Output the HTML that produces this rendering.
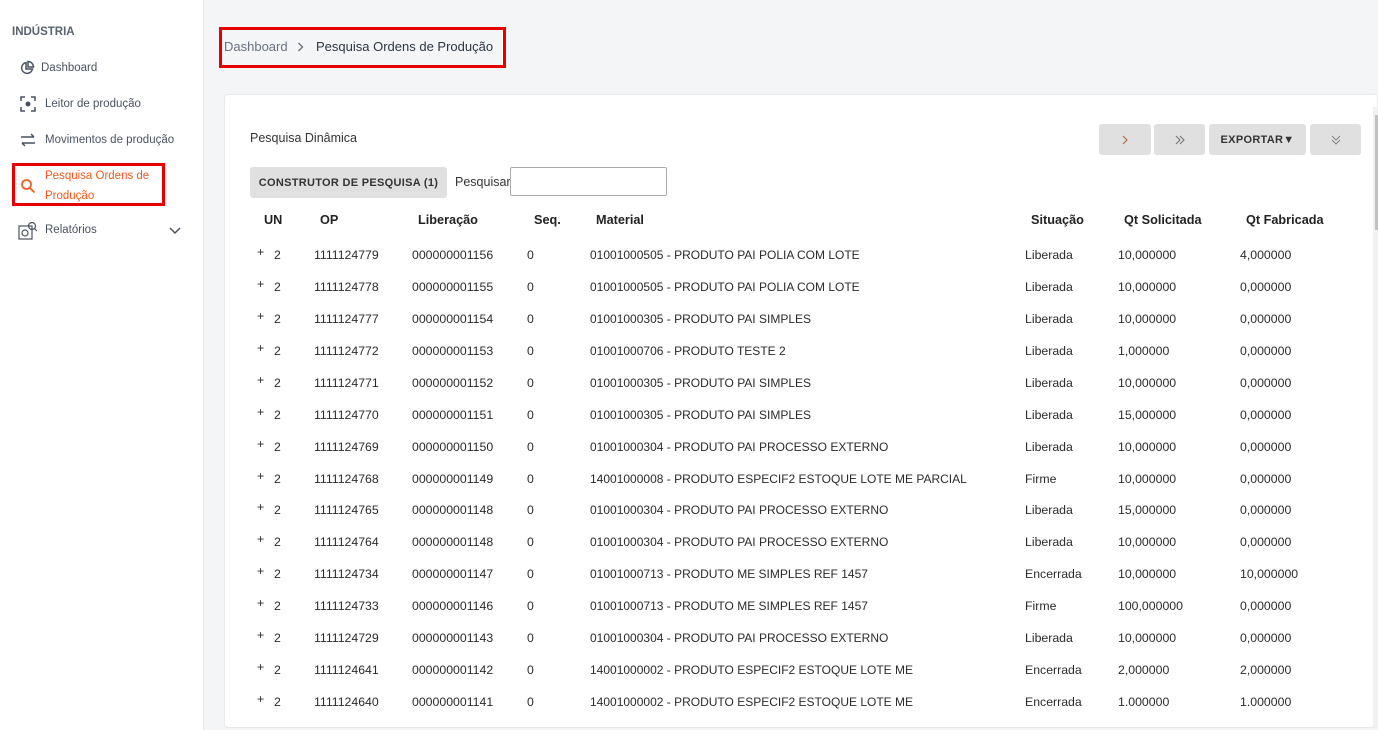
<!DOCTYPE html>
<html><head><meta charset="utf-8">
<style>
*{margin:0;padding:0;box-sizing:border-box}
body{width:1378px;height:730px;overflow:hidden;background:#f4f5f7;font-family:"Liberation Sans",sans-serif;position:relative;color:#222}
.a{position:absolute;white-space:nowrap}
#side{position:absolute;left:0;top:0;width:204px;height:730px;background:#fff;border-right:1px solid #e4e6ea}
.nav{font-size:11.5px;color:#4a5260}
.card{position:absolute;left:224px;top:94px;width:1154px;height:634px;background:#fff;border:1px solid #e6e8eb;border-radius:4px}
.btn{position:absolute;background:#e0e0e0;border-radius:3px;height:31px;top:124px;font-size:11.5px;color:#333;display:flex;align-items:center;justify-content:center;letter-spacing:.3px}
.h{font-size:12.7px;font-weight:bold;color:#222;top:213px}
.c{font-size:12.3px;color:#2a2a2a}
.m{font-size:12px}
</style></head><body>
<div id="side">
<div class="a" style="left:12px;top:26px;font-size:11.5px;color:#5a6270;font-weight:bold">INDÚSTRIA</div>
<svg class="a" style="left:19px;top:60px" width="16" height="16" viewBox="0 0 16 16" fill="none" stroke="#4a5260" stroke-width="1.5"><path d="M7 2.5A5.5 5.5 0 1 0 13.5 9H7z"/><path d="M9 1.5A5.5 5.5 0 0 1 14.5 7H9z"/></svg>
<div class="a nav" style="left:41px;top:62px">Dashboard</div>
<svg class="a" style="left:20px;top:96px" width="16" height="16" viewBox="0 0 16 16" fill="none" stroke="#4a5260" stroke-width="1.5"><path d="M1 5V1h4M11 1h4v4M15 11v4h-4M5 15H1v-4"/><circle cx="8" cy="8" r="2.5" fill="#4a5260" stroke="none"/></svg>
<div class="a nav" style="left:45px;top:98px">Leitor de produção</div>
<svg class="a" style="left:20px;top:132px" width="16" height="16" viewBox="0 0 16 16" fill="none" stroke="#4a5260" stroke-width="1.5"><path d="M1 5h13M11 2l3 3M15 11H2M5 14l-3-3"/></svg>
<div class="a nav" style="left:45px;top:134px">Movimentos de produção</div>
<div class="a" style="left:12px;top:163px;width:153px;height:43px;border:3px solid #e60000"></div>
<svg class="a" style="left:20px;top:178px" width="16" height="16" viewBox="0 0 16 16" fill="none" stroke="#f06020" stroke-width="1.8"><circle cx="6.5" cy="6.5" r="4.5"/><path d="M10 10l4.5 4.5"/></svg>
<div class="a nav" style="left:45px;top:166px;color:#f25a1a;line-height:20px">Pesquisa Ordens de<br>Produção</div>
<svg class="a" style="left:18px;top:221px" width="20" height="20" viewBox="0 0 20 20" fill="none" stroke="#4a5260" stroke-width="1.2"><rect x="1" y="5" width="13" height="13"/><circle cx="7" cy="12" r="3"/><circle cx="14" cy="5" r="3.5"/><path d="M16.5 7.5l2.5 2.5"/></svg>
<div class="a nav" style="left:45px;top:224px">Relatórios</div>
<svg class="a" style="left:169px;top:227px" width="12" height="8" viewBox="0 0 12 8" fill="none" stroke="#4a5260" stroke-width="1.5"><path d="M1 1l5 5 5-5"/></svg>
</div>
<div class="a" style="left:219px;top:27px;width:287px;height:41px;border:3px solid #e60000"></div>
<div class="a" style="left:224px;top:39px;font-size:13px;color:#6a7180">Dashboard</div>
<svg class="a" style="left:297px;top:42px" width="7" height="10" viewBox="0 0 7 10" fill="none" stroke="#6a7180" stroke-width="1.4"><path d="M1.5 1l4 4-4 4"/></svg>
<div class="a" style="left:316px;top:39px;font-size:13px;color:#2c3444">Pesquisa Ordens de Produção</div>
<div class="card"></div>
<div class="a" style="left:1373px;top:107px;width:5px;height:620px;background:#f1f1f1"></div>
<div class="a" style="left:1375px;top:115px;width:3px;height:115px;background:#c1c1c1"></div>
<div class="a" style="left:250px;top:131px;font-size:12.5px;color:#333">Pesquisa Dinâmica</div>
<div class="btn" style="left:1099px;width:52px"><svg width="8" height="12" viewBox="0 0 8 12" fill="none" stroke="#b86a40" stroke-width="1.2"><path d="M2 2l4 4-4 4"/></svg></div>
<div class="btn" style="left:1154px;width:51px"><svg width="12" height="12" viewBox="0 0 12 12" fill="none" stroke="#777" stroke-width="1.1"><path d="M2 2l4 4-4 4M6 2l4 4-4 4"/></svg></div>
<div class="btn" style="left:1209px;width:97px;font-weight:bold;color:#333;font-size:11px">EXPORTAR▼</div>
<div class="btn" style="left:1310px;width:51px"><svg width="12" height="10" viewBox="0 0 12 10" fill="none" stroke="#888" stroke-width="1.1"><path d="M2 1l4 4 4-4M2 5l4 4 4-4"/></svg></div>
<div class="btn" style="left:250px;top:167px;width:197px;font-size:11px;font-weight:bold;color:#333">CONSTRUTOR DE PESQUISA (1)</div>
<div class="a" style="left:455px;top:175px;font-size:12.5px;color:#333">Pesquisar</div>
<div class="a" style="left:510px;top:167px;width:157px;height:29px;border:1px solid #aaa;border-radius:2px"></div>
<div class="a h" style="left:264px">UN</div>
<div class="a h" style="left:320px">OP</div>
<div class="a h" style="left:418px">Liberação</div>
<div class="a h" style="left:534px">Seq.</div>
<div class="a h" style="left:596px">Material</div>
<div class="a h" style="left:1031px">Situação</div>
<div class="a h" style="left:1124px">Qt Solicitada</div>
<div class="a h" style="left:1246px">Qt Fabricada</div>
<div id="rows"></div>
<script>
var d=[["1111124779","000000001156","01001000505 - PRODUTO PAI POLIA COM LOTE","Liberada","10,000000","4,000000"],
["1111124778","000000001155","01001000505 - PRODUTO PAI POLIA COM LOTE","Liberada","10,000000","0,000000"],
["1111124777","000000001154","01001000305 - PRODUTO PAI SIMPLES","Liberada","10,000000","0,000000"],
["1111124772","000000001153","01001000706 - PRODUTO TESTE 2","Liberada","1,000000","0,000000"],
["1111124771","000000001152","01001000305 - PRODUTO PAI SIMPLES","Liberada","10,000000","0,000000"],
["1111124770","000000001151","01001000305 - PRODUTO PAI SIMPLES","Liberada","15,000000","0,000000"],
["1111124769","000000001150","01001000304 - PRODUTO PAI PROCESSO EXTERNO","Liberada","10,000000","0,000000"],
["1111124768","000000001149","14001000008 - PRODUTO ESPECIF2 ESTOQUE LOTE ME PARCIAL","Firme","10,000000","0,000000"],
["1111124765","000000001148","01001000304 - PRODUTO PAI PROCESSO EXTERNO","Liberada","15,000000","0,000000"],
["1111124764","000000001148","01001000304 - PRODUTO PAI PROCESSO EXTERNO","Liberada","10,000000","0,000000"],
["1111124734","000000001147","01001000713 - PRODUTO ME SIMPLES REF 1457","Encerrada","10,000000","10,000000"],
["1111124733","000000001146","01001000713 - PRODUTO ME SIMPLES REF 1457","Firme","100,000000","0,000000"],
["1111124729","000000001143","01001000304 - PRODUTO PAI PROCESSO EXTERNO","Liberada","10,000000","0,000000"],
["1111124641","000000001142","14001000002 - PRODUTO ESPECIF2 ESTOQUE LOTE ME","Encerrada","2,000000","2,000000"],
["1111124640","000000001141","14001000002 - PRODUTO ESPECIF2 ESTOQUE LOTE ME","Encerrada","1.000000","1.000000"]];
var h="";
d.forEach(function(r,i){var y=Math.round(248+i*31.93);
h+='<div class="a c" style="left:257px;top:'+(y-3)+'px">+</div>';
var xs=[274,314,412,527,590,1025,1118,1240],v=["2",r[0],r[1],"0",r[2],r[3],r[4],r[5]];
for(var k=0;k<8;k++)h+='<div class="a c'+(k==4?' m':'')+'" style="left:'+xs[k]+'px;top:'+y+'px">'+v[k]+'</div>';});
document.getElementById("rows").innerHTML=h;
</script>
</body></html>
